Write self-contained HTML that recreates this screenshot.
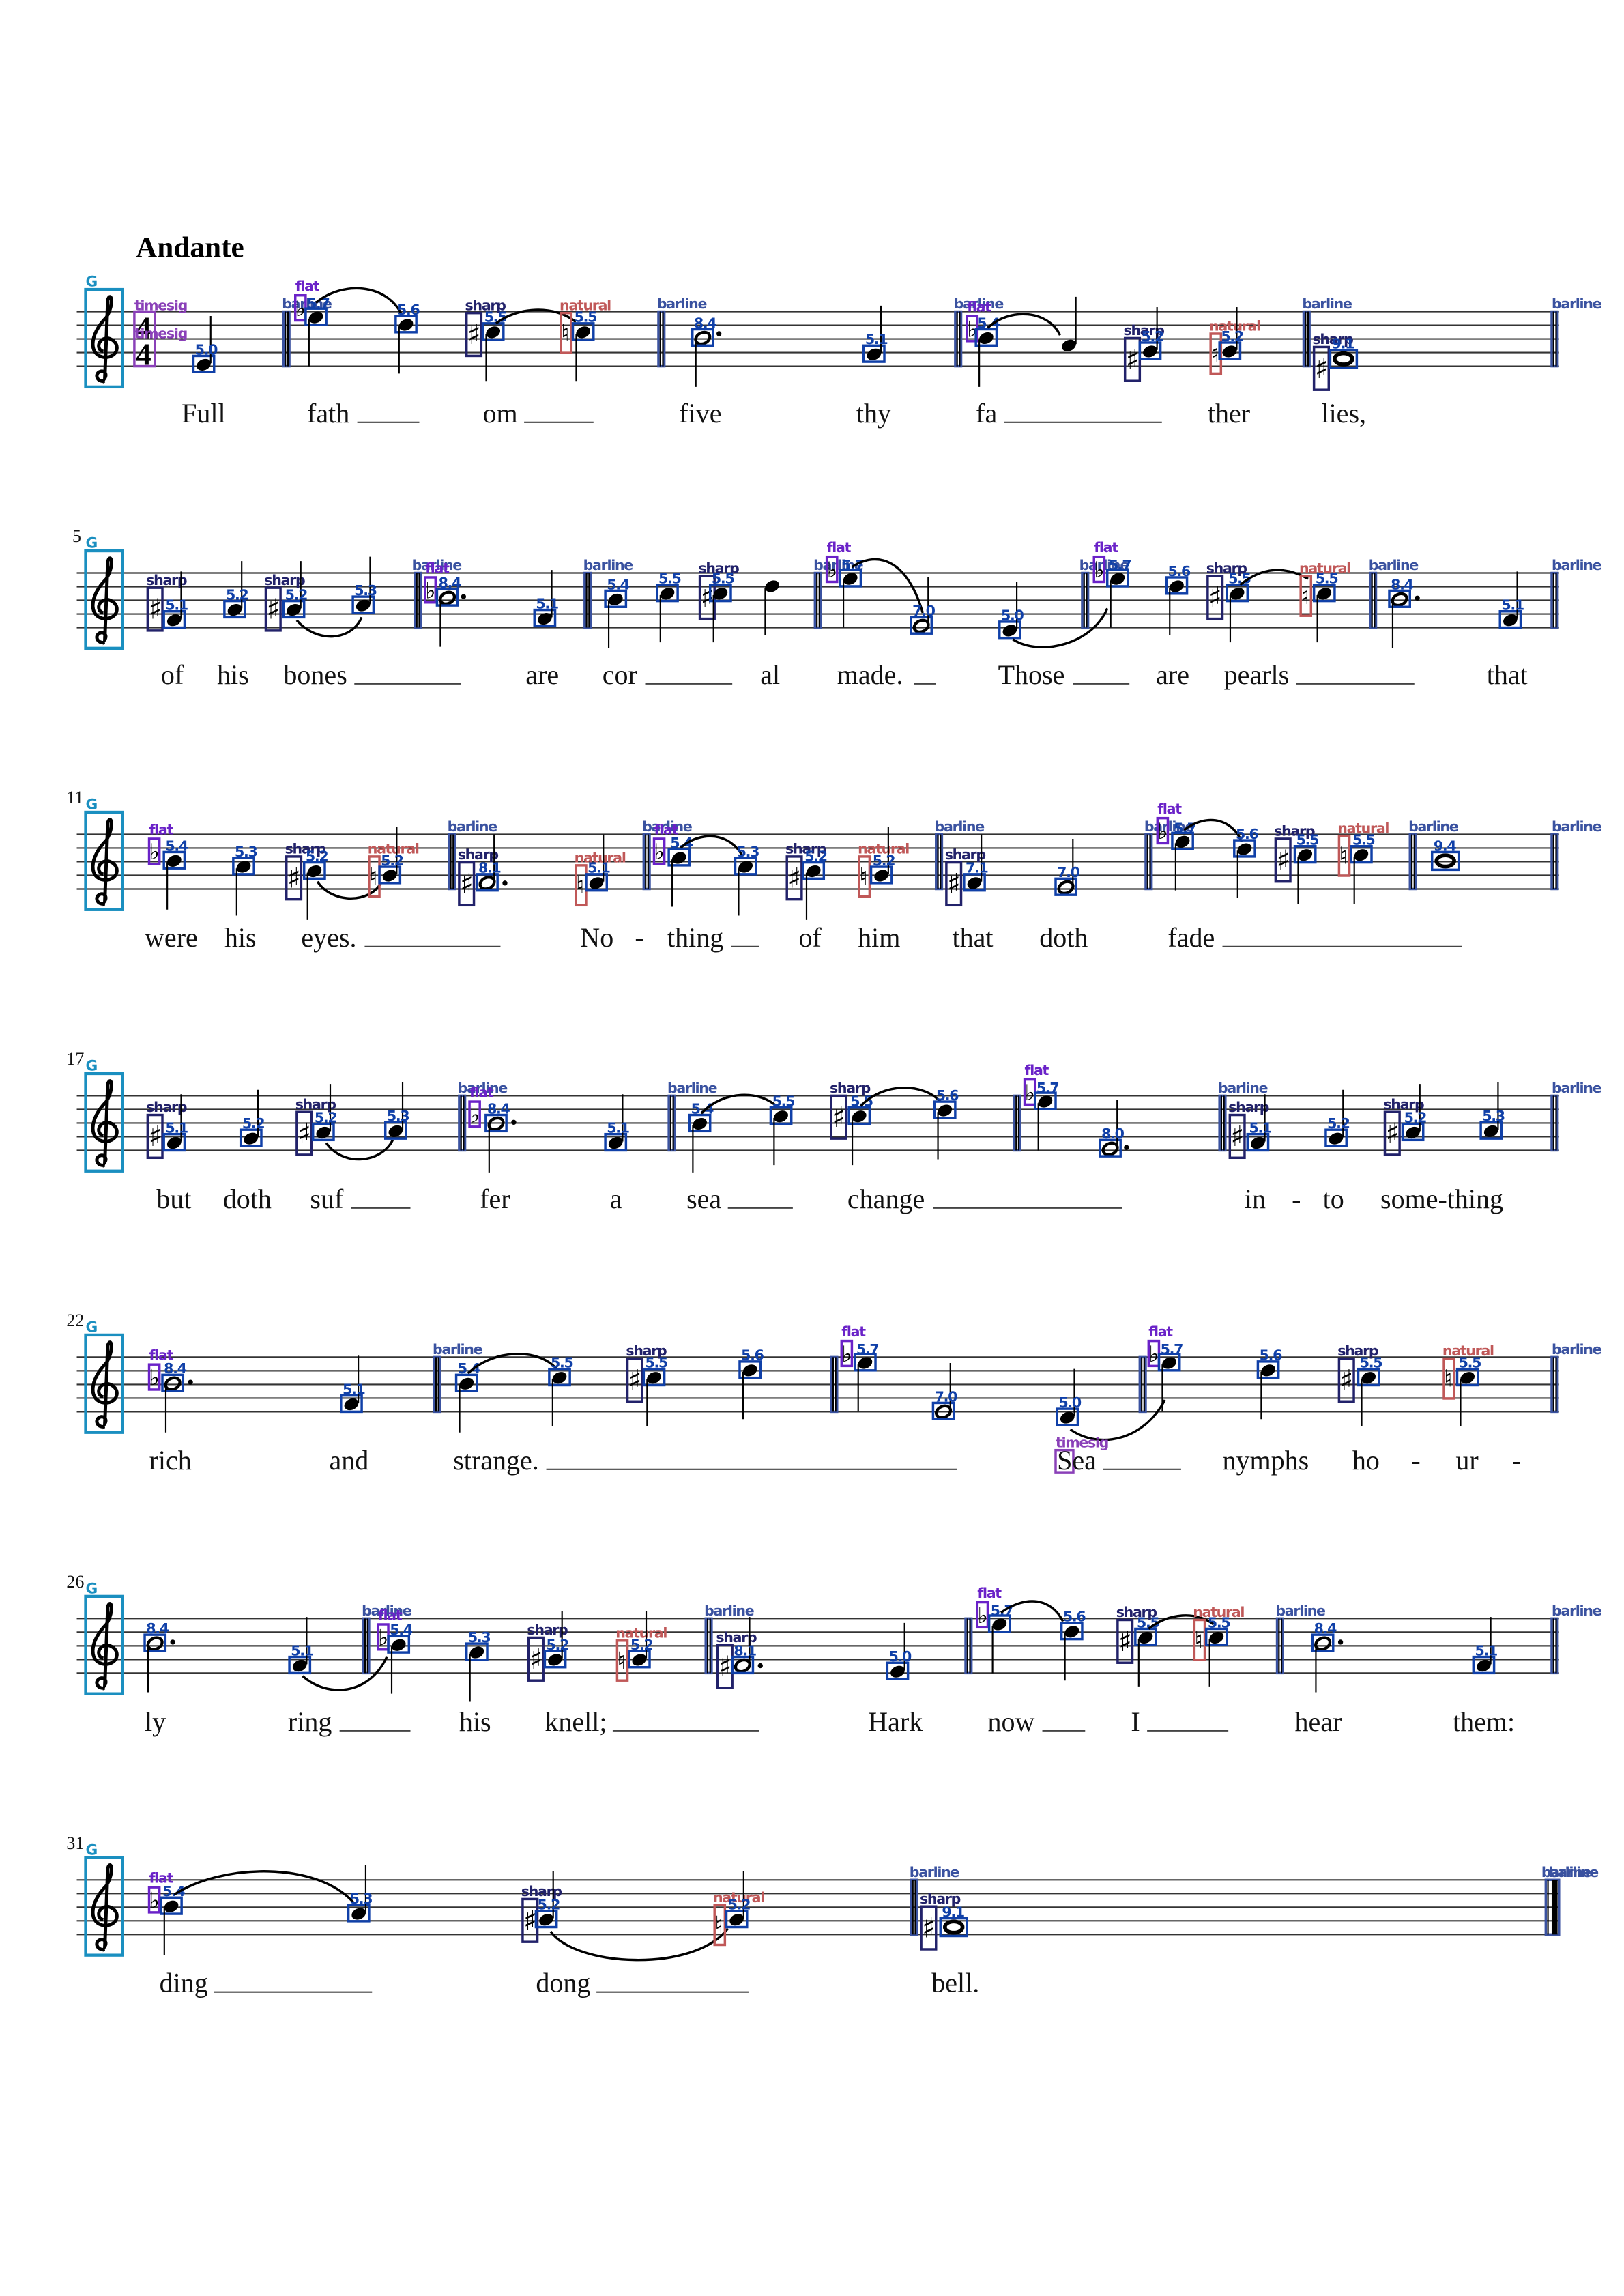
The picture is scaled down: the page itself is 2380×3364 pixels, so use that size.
<!DOCTYPE html>
<html><head><meta charset="utf-8"><style>
html,body{margin:0;padding:0;background:#fff}
svg{display:block}
.st line{stroke:#333;stroke-width:1}
.ly{font-family:"Liberation Serif",serif;font-size:18.5px;fill:#111}
.ex{stroke:#444;stroke-width:1}
.ln{font-family:"DejaVu Sans",sans-serif;font-size:9.5px;font-weight:bold;fill:#1040a8;letter-spacing:-.6px}
.lb{font-family:"DejaVu Sans",sans-serif;font-size:9.5px;font-weight:bold;fill:#3a52a0;letter-spacing:-.6px}
.bx{fill:none;stroke:#1040a8;stroke-width:1.6}
.bb{fill:none;stroke:#3a52a0;stroke-width:1.6}
.sl{fill:none;stroke:#000;stroke-width:1.6}
.num{font-family:"Liberation Serif",serif;font-size:12px;fill:#111}
</style></head><body>
<svg width="2380" height="3364" viewBox="0 0 1100 1554.8" xmlns="http://www.w3.org/2000/svg">
<defs>
<g id="staff" class="st"><line x1="52" x2="1056" y1="0" y2="0"/><line x1="52" x2="1056" y1="9.25" y2="9.25"/><line x1="52" x2="1056" y1="18.5" y2="18.5"/><line x1="52" x2="1056" y1="27.75" y2="27.75"/><line x1="52" x2="1056" y1="37" y2="37"/></g>
<g id="clef"><rect x="58" y="-15" width="25" height="66" fill="none" stroke="#1a8fc0" stroke-width="2"/>
<text x="58" y="-17" font-family="DejaVu Sans,sans-serif" font-size="10" font-weight="bold" fill="#1a8fc0">G</text>
<path d="M71,47 C66,48 64,43 67,41 C70,39 73,42 71,45 L73,-8 C75,-14 78,-6 72,4 C60,16 60,30 71,31 C81,31 82,20 73,18 C66,18 65,26 70,27" fill="none" stroke="#000" stroke-width="2.3"/></g>
<g id="q"><ellipse cx="0" cy="0" rx="5" ry="3.7" transform="rotate(-25)" fill="#000"/><rect x="-7" y="-6" width="14" height="11" class="bx"/></g>
<g id="h"><ellipse cx="0" cy="0" rx="5" ry="3.7" transform="rotate(-25)" fill="none" stroke="#000" stroke-width="2"/><rect x="-7" y="-6" width="14" height="11" class="bx"/></g>
<g id="w"><ellipse cx="0" cy="0" rx="6" ry="3.8" fill="none" stroke="#000" stroke-width="2.6"/><rect x="-9" y="-6" width="18" height="12" class="bx"/></g>
<line id="su" x1="4.7" y1="-1" x2="4.7" y2="-33" stroke="#000" stroke-width="1"/>
<line id="sd" x1="-4.7" y1="1" x2="-4.7" y2="33" stroke="#000" stroke-width="1"/>
<g id="bar"><rect x="0" y="0" width="4" height="37" class="bb"/><line x1="1.3" x2="1.3" y1="0" y2="37" stroke="#000"/><line x1="3" x2="3" y1="0" y2="37" stroke="#000"/></g>
<g id="sh"><rect x="0" y="0" width="10" height="29" fill="none" stroke="#22226a" stroke-width="1.6"/><text x="0.5" y="21" font-family="DejaVu Sans,sans-serif" font-size="19" fill="#000">♯</text><text x="-1" y="-2" font-family="DejaVu Sans,sans-serif" font-size="9.5" font-weight="bold" fill="#22226a" letter-spacing="-.6">sharp</text></g>
<g id="fl"><rect x="0" y="0" width="7" height="17" fill="none" stroke="#6a22c8" stroke-width="1.6"/><text x="0" y="14" font-family="DejaVu Sans,sans-serif" font-size="15" fill="#000">♭</text><text x="0" y="-3" font-family="DejaVu Sans,sans-serif" font-size="9.5" font-weight="bold" fill="#6a22c8" letter-spacing="-.6">flat</text></g>
<g id="na"><rect x="0" y="0" width="7" height="27" fill="none" stroke="#c05858" stroke-width="1.6"/><text x="0" y="19" font-family="DejaVu Sans,sans-serif" font-size="16" fill="#000">♮</text><text x="-1" y="-2" font-family="DejaVu Sans,sans-serif" font-size="9.5" font-weight="bold" fill="#c05858" letter-spacing="-.6">natural</text></g>
</defs>

<text x="92" y="174" font-family="Liberation Serif,serif" font-size="20" font-weight="bold">Andante</text>

<!-- SYSTEM 1 -->
<g transform="translate(0,211)"><use href="#staff"/><use href="#clef"/></g>
<rect x="91" y="211" width="14" height="37" fill="none" stroke="#8a40b8" stroke-width="1.6"/>
<text x="92" y="229" font-family="Liberation Serif,serif" font-size="21" font-weight="bold">4</text>
<text x="92" y="247" font-family="Liberation Serif,serif" font-size="21" font-weight="bold">4</text>
<text x="91" y="210" font-family="DejaVu Sans,sans-serif" font-size="9.5" font-weight="bold" fill="#8a40b8" letter-spacing="-.6">timesig</text>
<text x="91" y="229" font-family="DejaVu Sans,sans-serif" font-size="9.5" font-weight="bold" fill="#8a40b8" letter-spacing="-.6">timesig</text>
<g transform="translate(138,247)"><use href="#q"/><use href="#su"/><text class="ln" x="-6" y="-7">5.0</text></g>
<g transform="translate(192,211)"><use href="#bar"/><text class="lb" x="-1" y="-2">barline</text></g>
<g transform="translate(200,200)"><use href="#fl"/></g>
<g transform="translate(214,215)"><use href="#q"/><use href="#sd"/><text class="ln" x="-6" y="-6">5.7</text></g>
<path class="sl" d="M214,205 C232,190 262,192 272,213"/>
<g transform="translate(275,220)"><use href="#q"/><use href="#sd"/><text class="ln" x="-6" y="-7">5.6</text></g>
<g transform="translate(316,212)"><use href="#sh"/></g>
<g transform="translate(334,225)"><use href="#q"/><use href="#sd"/><text class="ln" x="-6" y="-7">5.5</text></g>
<path class="sl" d="M336,219 C350,208 375,206 390,218"/>
<g transform="translate(380,212)"><use href="#na"/></g>
<g transform="translate(395,225)"><use href="#q"/><use href="#sd"/><text class="ln" x="-6" y="-7">5.5</text></g>
<g transform="translate(446,211)"><use href="#bar"/><text class="lb" x="-1" y="-2">barline</text></g>
<g transform="translate(476,229)"><use href="#h"/><use href="#sd"/><text class="ln" x="-6" y="-7">8.4</text><circle cx="11" cy="-3" r="1.7"/></g>
<g transform="translate(592,240)"><use href="#q"/><use href="#su"/><text class="ln" x="-6" y="-7">5.1</text></g>
<g transform="translate(647,211)"><use href="#bar"/><text class="lb" x="-1" y="-2">barline</text></g>
<g transform="translate(655,214)"><use href="#fl"/></g>
<g transform="translate(668,229)"><use href="#q"/><use href="#sd"/><text class="ln" x="-6" y="-7">5.4</text></g>
<path class="sl" d="M669,222 C684,208 710,210 718,227"/>
<g transform="translate(724,234)"><ellipse cx="0" cy="0" rx="5" ry="3.7" transform="rotate(-25)"/><use href="#su"/></g>
<g transform="translate(762,229)"><use href="#sh"/></g>
<g transform="translate(779,238)"><use href="#q"/><line x1="4.7" y1="-1" x2="4.7" y2="-30" stroke="#000"/><text class="ln" x="-6" y="-7">5.2</text></g>
<g transform="translate(820,226)"><use href="#na"/></g>
<g transform="translate(833,238)"><use href="#q"/><line x1="4.7" y1="-1" x2="4.7" y2="-30" stroke="#000"/><text class="ln" x="-6" y="-7">5.2</text></g>
<g transform="translate(883,211)"><use href="#bar"/><text class="lb" x="-1" y="-2">barline</text></g>
<g transform="translate(890,235)"><use href="#sh"/></g>
<g transform="translate(910,243)"><use href="#w"/><text class="ln" x="-8" y="-7">9.1</text></g>
<g transform="translate(1051,211)"><use href="#bar"/><text class="lb" x="0" y="-2">barline</text></g>
<g class="ly"><text x="123" y="286">Full</text><text x="208" y="286">fath</text><text x="327" y="286">om</text><text x="460" y="286">five</text><text x="580" y="286">thy</text><text x="661" y="286">fa</text><text x="818" y="286">ther</text><text x="895" y="286">lies,</text></g>
<g class="ex"><line x1="242" x2="284" y1="286" y2="286"/><line x1="355" x2="402" y1="286" y2="286"/><line x1="680" x2="787" y1="286" y2="286"/></g>

<!-- SYSTEM 2 -->
<g transform="translate(0,388)"><use href="#staff"/><use href="#clef"/></g>
<text class="num" x="49" y="367">5</text>
<g transform="translate(100,398)"><use href="#sh"/></g>
<g transform="translate(118,420)"><use href="#q"/><use href="#su"/><text class="ln" x="-6" y="-7">5.1</text></g>
<g transform="translate(159,413)"><use href="#q"/><use href="#su"/><text class="ln" x="-6" y="-7">5.2</text></g>
<g transform="translate(180,398)"><use href="#sh"/></g>
<g transform="translate(199,413)"><use href="#q"/><use href="#su"/><text class="ln" x="-6" y="-7">5.2</text></g>
<path class="sl" d="M201,420 C215,436 238,434 245,418"/>
<g transform="translate(246,410)"><use href="#q"/><use href="#su"/><text class="ln" x="-6" y="-7">5.3</text></g>
<g transform="translate(281,388)"><use href="#bar"/><text class="lb" x="-2" y="-2">barline</text></g>
<g transform="translate(288,391)"><use href="#fl"/></g>
<g transform="translate(303,405)"><use href="#h"/><use href="#sd"/><text class="ln" x="-6" y="-7">8.4</text><circle cx="11" cy="-1" r="1.7"/></g>
<g transform="translate(369,419)"><use href="#q"/><use href="#su"/><text class="ln" x="-6" y="-7">5.1</text></g>
<g transform="translate(396,388)"><use href="#bar"/><text class="lb" x="-1" y="-2">barline</text></g>
<g transform="translate(417,406)"><use href="#q"/><use href="#sd"/><text class="ln" x="-6" y="-7">5.4</text></g>
<g transform="translate(452,402)"><use href="#q"/><use href="#sd"/><text class="ln" x="-6" y="-7">5.5</text></g>
<g transform="translate(474,390)"><use href="#sh"/></g>
<g transform="translate(488,402)"><use href="#q"/><use href="#sd"/><text class="ln" x="-6" y="-7">5.5</text></g>
<g transform="translate(523,397)"><ellipse cx="0" cy="0" rx="5" ry="3.7" transform="rotate(-25)"/><use href="#sd"/></g>
<g transform="translate(552,388)"><use href="#bar"/><text class="lb" x="-1" y="-2">barline</text></g>
<g transform="translate(560,377)"><use href="#fl"/></g>
<g transform="translate(576,392)"><use href="#q"/><use href="#sd"/><text class="ln" x="-6" y="-6">5.7</text></g>
<path class="sl" d="M577,384 C595,372 615,380 625,415"/>
<g transform="translate(624,424)"><use href="#h"/><use href="#su"/><text class="ln" x="-6" y="-7">7.0</text></g>
<g transform="translate(684,427)"><use href="#q"/><use href="#su"/><text class="ln" x="-6" y="-7">5.0</text></g>
<path class="sl" d="M686,433 C705,445 740,436 750,412"/>
<g transform="translate(733,388)"><use href="#bar"/><text class="lb" x="-2" y="-2">barline</text></g>
<g transform="translate(741,377)"><use href="#fl"/></g>
<g transform="translate(757,392)"><use href="#q"/><use href="#sd"/><text class="ln" x="-6" y="-6">5.7</text></g>
<g transform="translate(797,397)"><use href="#q"/><use href="#sd"/><text class="ln" x="-6" y="-7">5.6</text></g>
<g transform="translate(818,390)"><use href="#sh"/></g>
<g transform="translate(838,402)"><use href="#q"/><use href="#sd"/><text class="ln" x="-6" y="-7">5.5</text></g>
<path class="sl" d="M840,396 C855,384 870,383 886,392"/>
<g transform="translate(881,390)"><use href="#na"/></g>
<g transform="translate(897,402)"><use href="#q"/><use href="#sd"/><text class="ln" x="-6" y="-7">5.5</text></g>
<g transform="translate(928,388)"><use href="#bar"/><text class="lb" x="-1" y="-2">barline</text></g>
<g transform="translate(948,406)"><use href="#h"/><use href="#sd"/><text class="ln" x="-6" y="-7">8.4</text><circle cx="12" cy="-1" r="1.7"/></g>
<g transform="translate(1023,420)"><use href="#q"/><use href="#su"/><text class="ln" x="-6" y="-7">5.1</text></g>
<g transform="translate(1051,388)"><use href="#bar"/><text class="lb" x="0" y="-2">barline</text></g>
<g class="ly"><text x="109" y="463">of</text><text x="147" y="463">his</text><text x="192" y="463">bones</text><text x="356" y="463">are</text><text x="408" y="463">cor</text><text x="515" y="463">al</text><text x="567" y="463">made.</text><text x="676" y="463">Those</text><text x="783" y="463">are</text><text x="829" y="463">pearls</text><text x="1007" y="463">that</text></g>
<g class="ex"><line x1="240" x2="312" y1="463" y2="463"/><line x1="437" x2="496" y1="463" y2="463"/><line x1="619" x2="634" y1="463" y2="463"/><line x1="727" x2="765" y1="463" y2="463"/><line x1="878" x2="958" y1="463" y2="463"/></g>

<!-- SYSTEM 3 -->
<g transform="translate(0,565)"><use href="#staff"/><use href="#clef"/></g>
<text class="num" x="45" y="544">11</text>
<g transform="translate(101,568)"><use href="#fl"/></g>
<g transform="translate(118,583)"><use href="#q"/><use href="#sd"/><text class="ln" x="-6" y="-7">5.4</text></g>
<g transform="translate(165,587)"><use href="#q"/><use href="#sd"/><text class="ln" x="-6" y="-7">5.3</text></g>
<g transform="translate(194,580)"><use href="#sh"/></g>
<g transform="translate(213,590)"><use href="#q"/><use href="#sd"/><text class="ln" x="-6" y="-7">5.2</text></g>
<path class="sl" d="M215,597 C225,612 250,612 258,598"/>
<g transform="translate(250,580)"><use href="#na"/></g>
<g transform="translate(264,593)"><use href="#q"/><use href="#su"/><text class="ln" x="-6" y="-7">5.2</text></g>
<g transform="translate(304,565)"><use href="#bar"/><text class="lb" x="-1" y="-2">barline</text></g>
<g transform="translate(311,584)"><use href="#sh"/></g>
<g transform="translate(330,598)"><use href="#h"/><use href="#su"/><text class="ln" x="-6" y="-7">8.1</text><circle cx="12" cy="0" r="1.7"/></g>
<g transform="translate(390,586)"><use href="#na"/></g>
<g transform="translate(404,598)"><use href="#q"/><use href="#su"/><text class="ln" x="-6" y="-7">5.1</text></g>
<g transform="translate(436,565)"><use href="#bar"/><text class="lb" x="-1" y="-2">barline</text></g>
<g transform="translate(443,568)"><use href="#fl"/></g>
<g transform="translate(460,581)"><use href="#q"/><use href="#sd"/><text class="ln" x="-6" y="-7">5.4</text></g>
<path class="sl" d="M461,574 C475,562 495,564 503,580"/>
<g transform="translate(505,587)"><use href="#q"/><use href="#sd"/><text class="ln" x="-6" y="-7">5.3</text></g>
<g transform="translate(533,580)"><use href="#sh"/></g>
<g transform="translate(551,590)"><use href="#q"/><use href="#sd"/><text class="ln" x="-6" y="-7">5.2</text></g>
<g transform="translate(582,580)"><use href="#na"/></g>
<g transform="translate(597,593)"><use href="#q"/><use href="#su"/><text class="ln" x="-6" y="-7">5.2</text></g>
<g transform="translate(634,565)"><use href="#bar"/><text class="lb" x="-1" y="-2">barline</text></g>
<g transform="translate(641,584)"><use href="#sh"/></g>
<g transform="translate(660,598)"><use href="#q"/><use href="#su"/><text class="ln" x="-6" y="-7">7.1</text></g>
<g transform="translate(722,601)"><use href="#h"/><use href="#su"/><text class="ln" x="-6" y="-7">7.0</text></g>
<g transform="translate(776,565)"><use href="#bar"/><text class="lb" x="-1" y="-2">barline</text></g>
<g transform="translate(784,554)"><use href="#fl"/></g>
<g transform="translate(801,570)"><use href="#q"/><use href="#sd"/><text class="ln" x="-6" y="-6">5.7</text></g>
<path class="sl" d="M802,562 C818,550 835,555 841,570"/>
<g transform="translate(843,575)"><use href="#q"/><use href="#sd"/><text class="ln" x="-6" y="-7">5.6</text></g>
<g transform="translate(864,568)"><use href="#sh"/></g>
<g transform="translate(884,579)"><use href="#q"/><use href="#sd"/><text class="ln" x="-6" y="-7">5.5</text></g>
<g transform="translate(907,566)"><use href="#na"/></g>
<g transform="translate(922,579)"><use href="#q"/><use href="#sd"/><text class="ln" x="-6" y="-7">5.5</text></g>
<g transform="translate(955,565)"><use href="#bar"/><text class="lb" x="-1" y="-2">barline</text></g>
<g transform="translate(979,583)"><use href="#w"/><text class="ln" x="-8" y="-7">9.4</text></g>
<g transform="translate(1051,565)"><use href="#bar"/><text class="lb" x="0" y="-2">barline</text></g>
<g class="ly"><text x="98" y="641">were</text><text x="152" y="641">his</text><text x="204" y="641">eyes.</text><text x="393" y="641">No</text><text x="430" y="641">-</text><text x="452" y="641">thing</text><text x="541" y="641">of</text><text x="581" y="641">him</text><text x="645" y="641">that</text><text x="704" y="641">doth</text><text x="791" y="641">fade</text></g>
<g class="ex"><line x1="247" x2="339" y1="641" y2="641"/><line x1="495" x2="514" y1="641" y2="641"/><line x1="828" x2="990" y1="641" y2="641"/></g>

<!-- SYSTEM 4 -->
<g transform="translate(0,742)"><use href="#staff"/><use href="#clef"/></g>
<text class="num" x="45" y="721">17</text>
<g transform="translate(100,755)"><use href="#sh"/></g>
<g transform="translate(118,774)"><use href="#q"/><use href="#su"/><text class="ln" x="-6" y="-7">5.1</text></g>
<g transform="translate(170,771)"><use href="#q"/><use href="#su"/><text class="ln" x="-6" y="-7">5.2</text></g>
<g transform="translate(201,753)"><use href="#sh"/></g>
<g transform="translate(219,767)"><use href="#q"/><use href="#su"/><text class="ln" x="-6" y="-7">5.2</text></g>
<path class="sl" d="M221,774 C232,790 258,788 266,772"/>
<g transform="translate(268,766)"><use href="#q"/><use href="#su"/><text class="ln" x="-6" y="-7">5.3</text></g>
<g transform="translate(311,742)"><use href="#bar"/><text class="lb" x="-1" y="-2">barline</text></g>
<g transform="translate(318,746)"><use href="#fl"/></g>
<g transform="translate(336,761)"><use href="#h"/><use href="#sd"/><text class="ln" x="-6" y="-7">8.4</text><circle cx="12" cy="-1" r="1.7"/></g>
<g transform="translate(417,774)"><use href="#q"/><use href="#su"/><text class="ln" x="-6" y="-7">5.1</text></g>
<g transform="translate(453,742)"><use href="#bar"/><text class="lb" x="-1" y="-2">barline</text></g>
<g transform="translate(474,761)"><use href="#q"/><use href="#sd"/><text class="ln" x="-6" y="-7">5.4</text></g>
<path class="sl" d="M475,754 C490,738 515,738 527,750"/>
<g transform="translate(529,756)"><use href="#q"/><use href="#sd"/><text class="ln" x="-6" y="-7">5.5</text></g>
<g transform="translate(563,742)"><use href="#sh"/></g>
<g transform="translate(582,756)"><use href="#q"/><use href="#sd"/><text class="ln" x="-6" y="-7">5.5</text></g>
<path class="sl" d="M583,749 C598,733 625,733 637,746"/>
<g transform="translate(640,752)"><use href="#q"/><use href="#sd"/><text class="ln" x="-6" y="-7">5.6</text></g>
<g transform="translate(687,742)"><use href="#bar"/></g>
<g transform="translate(694,731)"><use href="#fl"/></g>
<g transform="translate(708,746)"><use href="#q"/><use href="#sd"/><text class="ln" x="-6" y="-6">5.7</text></g>
<g transform="translate(752,778)"><use href="#h"/><use href="#su"/><text class="ln" x="-6" y="-7">8.0</text><circle cx="11" cy="-1" r="1.7"/></g>
<g transform="translate(826,742)"><use href="#bar"/><text class="lb" x="-1" y="-2">barline</text></g>
<g transform="translate(833,755)"><use href="#sh"/></g>
<g transform="translate(852,774)"><use href="#q"/><use href="#su"/><text class="ln" x="-6" y="-7">5.1</text></g>
<g transform="translate(905,771)"><use href="#q"/><use href="#su"/><text class="ln" x="-6" y="-7">5.2</text></g>
<g transform="translate(938,753)"><use href="#sh"/></g>
<g transform="translate(957,767)"><use href="#q"/><use href="#su"/><text class="ln" x="-6" y="-7">5.2</text></g>
<g transform="translate(1010,766)"><use href="#q"/><use href="#su"/><text class="ln" x="-6" y="-7">5.3</text></g>
<g transform="translate(1051,742)"><use href="#bar"/><text class="lb" x="0" y="-2">barline</text></g>
<g class="ly"><text x="106" y="818">but</text><text x="151" y="818">doth</text><text x="210" y="818">suf</text><text x="325" y="818">fer</text><text x="413" y="818">a</text><text x="465" y="818">sea</text><text x="574" y="818">change</text><text x="843" y="818">in</text><text x="875" y="818">-</text><text x="896" y="818">to</text><text x="935" y="818">some-thing</text></g>
<g class="ex"><line x1="238" x2="278" y1="818" y2="818"/><line x1="493" x2="537" y1="818" y2="818"/><line x1="632" x2="760" y1="818" y2="818"/></g>

<!-- SYSTEM 5 -->
<g transform="translate(0,919)"><use href="#staff"/><use href="#clef"/></g>
<text class="num" x="45" y="898">22</text>
<g transform="translate(101,924)"><use href="#fl"/></g>
<g transform="translate(117,937)"><use href="#h"/><use href="#sd"/><text class="ln" x="-6" y="-7">8.4</text><circle cx="12" cy="-1" r="1.7"/></g>
<g transform="translate(238,951)"><use href="#q"/><use href="#su"/><text class="ln" x="-6" y="-7">5.1</text></g>
<g transform="translate(294,919)"><use href="#bar"/><text class="lb" x="-1" y="-2">barline</text></g>
<g transform="translate(316,937)"><use href="#q"/><use href="#sd"/><text class="ln" x="-6" y="-7">5.4</text></g>
<path class="sl" d="M317,930 C335,913 365,913 377,927"/>
<g transform="translate(379,933)"><use href="#q"/><use href="#sd"/><text class="ln" x="-6" y="-7">5.5</text></g>
<g transform="translate(425,920)"><use href="#sh"/></g>
<g transform="translate(443,933)"><use href="#q"/><use href="#sd"/><text class="ln" x="-6" y="-7">5.5</text></g>
<g transform="translate(508,928)"><use href="#q"/><use href="#sd"/><text class="ln" x="-6" y="-7">5.6</text></g>
<g transform="translate(563,919)"><use href="#bar"/></g>
<g transform="translate(570,908)"><use href="#fl"/></g>
<g transform="translate(586,923)"><use href="#q"/><use href="#sd"/><text class="ln" x="-6" y="-6">5.7</text></g>
<g transform="translate(639,956)"><use href="#h"/><use href="#su"/><text class="ln" x="-6" y="-7">7.0</text></g>
<g transform="translate(723,960)"><use href="#q"/><use href="#su"/><text class="ln" x="-6" y="-7">5.0</text></g>
<path class="sl" d="M725,968 C745,982 775,975 789,948"/>
<g transform="translate(772,919)"><use href="#bar"/></g>
<g transform="translate(778,908)"><use href="#fl"/></g>
<g transform="translate(792,923)"><use href="#q"/><use href="#sd"/><text class="ln" x="-6" y="-6">5.7</text></g>
<g transform="translate(859,928)"><use href="#q"/><use href="#sd"/><text class="ln" x="-6" y="-7">5.6</text></g>
<g transform="translate(907,920)"><use href="#sh"/></g>
<g transform="translate(927,933)"><use href="#q"/><use href="#sd"/><text class="ln" x="-6" y="-7">5.5</text></g>
<g transform="translate(978,920)"><use href="#na"/></g>
<g transform="translate(994,933)"><use href="#q"/><use href="#sd"/><text class="ln" x="-6" y="-7">5.5</text></g>
<g transform="translate(1051,919)"><use href="#bar"/><text class="lb" x="0" y="-2">barline</text></g>
<rect x="715" y="982" width="12" height="15" fill="none" stroke="#8a40b8" stroke-width="1.6"/>
<text x="715" y="980" font-family="DejaVu Sans,sans-serif" font-size="9.5" font-weight="bold" fill="#8a40b8" letter-spacing="-.6">timesig</text>
<g class="ly"><text x="101" y="995">rich</text><text x="223" y="995">and</text><text x="307" y="995">strange.</text><text x="716" y="995">Sea</text><text x="828" y="995">nymphs</text><text x="916" y="995">ho</text><text x="956" y="995">-</text><text x="986" y="995">ur</text><text x="1024" y="995">-</text></g>
<g class="ex"><line x1="370" x2="648" y1="995" y2="995"/><line x1="747" x2="800" y1="995" y2="995"/></g>

<!-- SYSTEM 6 -->
<g transform="translate(0,1096)"><use href="#staff"/><use href="#clef"/></g>
<text class="num" x="45" y="1075">26</text>
<g transform="translate(105,1113)"><use href="#h"/><use href="#sd"/><text class="ln" x="-6" y="-7">8.4</text><circle cx="12" cy="-1" r="1.7"/></g>
<g transform="translate(203,1128)"><use href="#q"/><use href="#su"/><text class="ln" x="-6" y="-7">5.1</text></g>
<path class="sl" d="M205,1135 C222,1150 250,1148 262,1122"/>
<g transform="translate(246,1096)"><use href="#bar"/><text class="lb" x="-1" y="-2">barline</text></g>
<g transform="translate(256,1100)"><use href="#fl"/></g>
<g transform="translate(270,1114)"><use href="#q"/><use href="#sd"/><text class="ln" x="-6" y="-7">5.4</text></g>
<g transform="translate(323,1119)"><use href="#q"/><use href="#sd"/><text class="ln" x="-6" y="-7">5.3</text></g>
<g transform="translate(358,1109)"><use href="#sh"/></g>
<g transform="translate(376,1124)"><use href="#q"/><use href="#su"/><text class="ln" x="-6" y="-7">5.2</text></g>
<g transform="translate(418,1111)"><use href="#na"/></g>
<g transform="translate(433,1124)"><use href="#q"/><use href="#su"/><text class="ln" x="-6" y="-7">5.2</text></g>
<g transform="translate(478,1096)"><use href="#bar"/><text class="lb" x="-1" y="-2">barline</text></g>
<g transform="translate(486,1114)"><use href="#sh"/></g>
<g transform="translate(503,1128)"><use href="#h"/><use href="#su"/><text class="ln" x="-6" y="-7">8.1</text><circle cx="12" cy="0" r="1.7"/></g>
<g transform="translate(608,1132)"><use href="#q"/><use href="#su"/><text class="ln" x="-6" y="-7">5.0</text></g>
<g transform="translate(654,1096)"><use href="#bar"/></g>
<g transform="translate(662,1085)"><use href="#fl"/></g>
<g transform="translate(677,1100)"><use href="#q"/><use href="#sd"/><text class="ln" x="-6" y="-6">5.7</text></g>
<path class="sl" d="M678,1092 C695,1080 712,1082 720,1098"/>
<g transform="translate(726,1105)"><use href="#q"/><use href="#sd"/><text class="ln" x="-6" y="-7">5.6</text></g>
<g transform="translate(757,1097)"><use href="#sh"/></g>
<g transform="translate(776,1109)"><use href="#q"/><use href="#sd"/><text class="ln" x="-6" y="-7">5.5</text></g>
<path class="sl" d="M778,1103 C792,1092 810,1091 822,1100"/>
<g transform="translate(809,1097)"><use href="#na"/></g>
<g transform="translate(824,1109)"><use href="#q"/><use href="#sd"/><text class="ln" x="-6" y="-7">5.5</text></g>
<g transform="translate(865,1096)"><use href="#bar"/><text class="lb" x="-1" y="-2">barline</text></g>
<g transform="translate(896,1113)"><use href="#h"/><use href="#sd"/><text class="ln" x="-6" y="-7">8.4</text><circle cx="12" cy="-1" r="1.7"/></g>
<g transform="translate(1005,1128)"><use href="#q"/><use href="#su"/><text class="ln" x="-6" y="-7">5.1</text></g>
<g transform="translate(1051,1096)"><use href="#bar"/><text class="lb" x="0" y="-2">barline</text></g>
<g class="ly"><text x="98" y="1172">ly</text><text x="195" y="1172">ring</text><text x="311" y="1172">his</text><text x="369" y="1172">knell;</text><text x="588" y="1172">Hark</text><text x="669" y="1172">now</text><text x="766" y="1172">I</text><text x="877" y="1172">hear</text><text x="984" y="1172">them:</text></g>
<g class="ex"><line x1="230" x2="278" y1="1172" y2="1172"/><line x1="415" x2="514" y1="1172" y2="1172"/><line x1="706" x2="735" y1="1172" y2="1172"/><line x1="777" x2="832" y1="1172" y2="1172"/></g>

<!-- SYSTEM 7 -->
<g transform="translate(0,1273)"><use href="#staff"/><use href="#clef"/></g>
<text class="num" x="45" y="1252">31</text>
<g transform="translate(101,1278)"><use href="#fl"/></g>
<g transform="translate(116,1291)"><use href="#q"/><use href="#sd"/><text class="ln" x="-6" y="-7">5.4</text></g>
<path class="sl" d="M118,1283 C150,1262 215,1260 240,1289"/>
<g transform="translate(243,1296)"><use href="#q"/><use href="#su"/><text class="ln" x="-6" y="-7">5.3</text></g>
<g transform="translate(354,1286)"><use href="#sh"/></g>
<g transform="translate(370,1300)"><use href="#q"/><use href="#su"/><text class="ln" x="-6" y="-7">5.2</text></g>
<path class="sl" d="M373,1308 C390,1332 470,1336 493,1306"/>
<g transform="translate(484,1290)"><use href="#na"/></g>
<g transform="translate(499,1300)"><use href="#q"/><use href="#su"/><text class="ln" x="-6" y="-7">5.2</text></g>
<g transform="translate(617,1273)"><use href="#bar"/><text class="lb" x="-1" y="-2">barline</text></g>
<g transform="translate(624,1291)"><use href="#sh"/></g>
<g transform="translate(646,1305)"><use href="#w"/><text class="ln" x="-8" y="-7">9.1</text></g>
<rect x="1047" y="1273" width="9" height="37" class="bb"/>
<line x1="1048.5" x2="1048.5" y1="1273" y2="1310" stroke="#000"/>
<rect x="1051" y="1273" width="4" height="37" fill="#000"/>
<text class="lb" x="1044" y="1271">barline</text><text class="lb" x="1049" y="1271">barline</text>
<g class="ly"><text x="108" y="1349">ding</text><text x="363" y="1349">dong</text><text x="631" y="1349">bell.</text></g>
<g class="ex"><line x1="145" x2="252" y1="1349" y2="1349"/><line x1="404" x2="507" y1="1349" y2="1349"/></g>
</svg>
</body></html>
